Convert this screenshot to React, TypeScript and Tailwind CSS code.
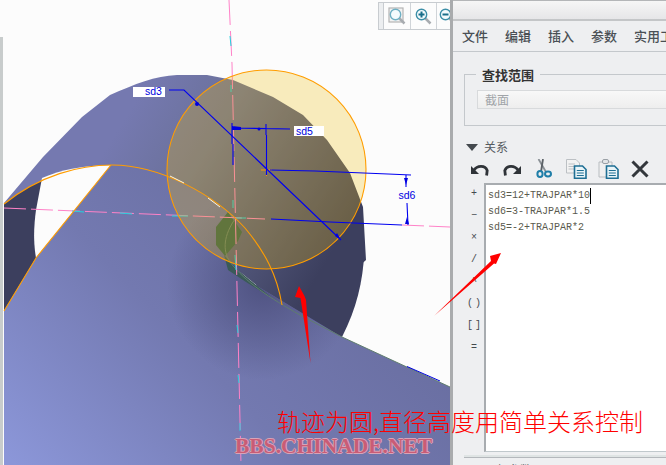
const cyanBits = [
  [230, 36, 231, 46],
  [231, 85, 231, 92],
  [233, 200, 233, 208],
  [235, 255, 236, 270],
  [237, 325, 238, 333],
  [238, 375, 239, 383],
  [240, 423, 240, 431],
  [72, 211, 84, 212],
  [120, 213, 132, 214],
  [172, 216, 188, 216],
  [236, 218, 246, 218],
]

function Viewport() {
  return (
    <svg viewBox="0 0 450 465" className="block w-full h-full">
      <defs>
        <linearGradient id="top" gradientUnits="userSpaceOnUse" x1="130" y1="110" x2="340" y2="240">
          <stop offset="0" stopColor="#7579b0" />
          <stop offset="0.35" stopColor="#6a7099" />
          <stop offset="1" stopColor="#3c3f5e" />
        </linearGradient>
        <linearGradient id="front" gradientUnits="userSpaceOnUse" x1="300" y1="220" x2="30" y2="480">
          <stop offset="0" stopColor="#6a6fa2" />
          <stop offset="0.45" stopColor="#7379b0" />
          <stop offset="1" stopColor="#8b96d8" />
        </linearGradient>
        <radialGradient id="frontShade" gradientUnits="userSpaceOnUse" cx="262" cy="285" r="95">
          <stop offset="0" stopColor="#4e5180" stopOpacity="0.95" />
          <stop offset="1" stopColor="#4e5180" stopOpacity="0" />
        </radialGradient>
      </defs>

      <path d="M360 205 C368 245 366 290 342 337 L260 300 L240 220 Z" fill="#3c3f5e" />
      <path d="M4 203 L43 157 L82 117 L110 95 C135 84 155 76 177 75 L207 75 L233 80 L273 97 L303 115 L327 140 L350 173 L363 207 L366 260 L300 320 L200 240 L4 240 Z" fill="url(#top)" />

      <path d="M4 204 C40 175 80 165 112 165 L36 258 L4 311 Z" fill="#3c3f5e" />
      <path d="M42 178 C60 170 85 165 112 165 L36 258 C33 240 34 225 36 210 Z" fill="#fcfcfc" />
      <path d="M36 258 L111 165 C160 165 205 190 235 218 C226 230 222 245 226 256 L247 280 L342 337 L450 387 L450 465 L4 465 L4 311 Z" fill="url(#front)" />
      <path d="M36 258 L111 165 C160 165 205 190 235 218 C226 230 222 245 226 256 L247 280 L342 337 L450 387 L450 465 L4 465 L4 311 Z" fill="url(#frontShade)" />

      <path d="M228 212 L216 227 L216 245 L225 256 L238 241 L242 232 Z" fill="#2f5c50" />
      <path d="M224 255 L240 272 L272 298 L246 282 L228 270 Z" fill="#3a5a58" />
      <path d="M235 219 C224 235 222 250 230 262 C245 282 270 298 300 315 L342 337 L450 387" fill="none" stroke="#5f7d6e" strokeWidth="1" />
      <path d="M407 366.5 L440 381" fill="none" stroke="#0000e0" strokeWidth="1" />

      <path d="M229 0 L232 64 M232 64 L241 465" fill="none" stroke="#ff82c8" strokeWidth="1" strokeDasharray="25 6" />
      <path d="M4 208 L265 219 M402 225 L450 227" fill="none" stroke="#ff82c8" strokeWidth="1" strokeDasharray="22 5" />
      {cyanBits.map((b) => (
        <line key={`${b[0]}-${b[1]}`} x1={b[0]} y1={b[1]} x2={b[2]} y2={b[3]} stroke="#22d3dd" strokeWidth="1" />
      ))}

      <circle cx="266.5" cy="169.5" r="99.5" fill="#edbc0b" fillOpacity="0.266" stroke="#ff9d00" strokeWidth="1.1" />
      <path d="M4 204 C40 175 80 165 112 165 C160 165 215 195 245 228 C265 252 277 275 282 305" fill="none" stroke="#ff9d00" strokeWidth="1.1" />
      <path d="M111 165 L36 258 L4 311" fill="none" stroke="#ff9d00" strokeWidth="1.1" />
      <path d="M170 176 L184 183 M208 198 L220 207" fill="none" stroke="#fff6dc" strokeWidth="1" />
      <path d="M261 170 L272 170 M266.5 165 L266.5 176" stroke="#ff9a00" strokeWidth="1" />

      <g fill="none" stroke="#0000f0" strokeWidth="1.1">
        <path d="M169 90 L184 90 L341 240" />
        <path d="M232 128 L290 129 M232 123 L232 144 M233 144 L233 165 M266 124 L266 135 M266.5 135 L266.5 175" />
        <path d="M270 170 L315 171 L388 174 L411 175 M271 219 L330 222 L402 225" />
        <path d="M406 175 L406 187 M407 203 L408 225" />
      </g>
      <g fill="#0000e0">
        <circle cx="197" cy="104" r="2" />
        <circle cx="259" cy="129" r="1.5" />
        <path d="M232 126 L241 127 L241 130 L232 130 Z" />
        <path d="M335 236 L341 240 L337 233 Z" />
        <path d="M404 178 L408 178 L406 185 Z" />
        <path d="M405 224 L409 224 L407 217 Z" />
      </g>

      <rect x="133" y="87" width="32" height="10" fill="#ffffff" />
      <rect x="294" y="126" width="30" height="10" fill="#ffffff" />
      <g fill="#0000e0" fontFamily="'Liberation Sans', sans-serif" fontSize="10.5">
        <text x="145" y="95">sd3</text>
        <text x="296" y="134.5">sd5</text>
        <text x="398.5" y="199">sd6</text>
      </g>

      <rect x="0" y="37" width="3" height="428" fill="#c8cccc" />
    </svg>
  )
}

function MagnifierIcon({ plus, minus, frame }: { plus?: boolean; minus?: boolean; frame?: boolean }) {
  return (
    <svg width="18" height="18" viewBox="0 0 18 18">
      {frame && <rect x="1" y="1" width="14" height="14" fill="#f2f2f2" stroke="#b4b4b4" strokeWidth="1.2" />}
      <line x1="11" y1="11" x2="16.5" y2="16.5" stroke="#a8acb0" strokeWidth="2.5" />
      <circle cx="7.5" cy="7.5" r="5.2" fill="#f4fbfd" stroke={frame ? "#6fb0c4" : "#3d8fa8"} strokeWidth="1.4" />
      {(plus || minus) && <rect x="4.5" y="6.5" width="6" height="2" fill="#1b6f8a" />}
      {plus && <rect x="6.5" y="4.5" width="2" height="6" fill="#1b6f8a" />}
    </svg>
  )
}

function ViewToolbar() {
  return (
    <div className="absolute left-[378px] top-[2px] flex h-[28px] w-[80px] border border-[#c8ccd0] bg-[#fcfcfc]">
      <div className="w-[5px] border-r border-[#c8ccd0] bg-[#eceef0]" />
      <div className="flex w-[27px] items-center justify-center border-r border-[#d0d4d8]"><MagnifierIcon frame /></div>
      <div className="flex w-[27px] items-center justify-center border-r border-[#d0d4d8]"><MagnifierIcon plus /></div>
      <div className="flex w-[20px] items-center justify-center"><MagnifierIcon minus /></div>
    </div>
  )
}

function UndoIcon({ flip }: { flip?: boolean }) {
  return (
    <svg width="18" height="12" viewBox="0 0 18 12" className={`mt-[2px] ${flip ? "-scale-x-100" : ""}`}>
      <path d="M3 6 C6 1.5 14 0.5 16.2 6.5 L15.6 11.5" fill="none" stroke="#2f3338" strokeWidth="2.8" />
      <path d="M0 2 L0 10 L8 10 Z" fill="#2f3338" />
    </svg>
  )
}

function ScissorsIcon() {
  return (
    <svg width="16" height="19" viewBox="0 0 16 19">
      <path d="M2.5 0 L10 13" stroke="#8a9096" strokeWidth="1.8" />
      <path d="M7 0 L5 13" stroke="#5a6066" strokeWidth="1.8" />
      <ellipse cx="4" cy="15" rx="2.6" ry="3" fill="none" stroke="#1f7ea8" strokeWidth="2" />
      <ellipse cx="12" cy="15" rx="3" ry="2.4" fill="none" stroke="#1f7ea8" strokeWidth="2" />
    </svg>
  )
}

function SheetIcon({ clip }: { clip?: boolean }) {
  return (
    <svg width="21" height="20" viewBox="0 0 21 20">
      {clip ? (
        <>
          <path d="M1 3 H14 V18 H1 Z" fill="#f0f0f0" stroke="#b8bcc0" />
          <rect x="4.5" y="0.5" width="6" height="4" rx="1.5" fill="#e4e6e8" stroke="#9aa0a6" />
        </>
      ) : (
        <>
          <path d="M0.5 0.5 H10 L13.5 4 V14 H0.5 Z" fill="#f2f2f2" stroke="#bcc0c4" />
          <path d="M2.5 5 H9 M2.5 7.5 H8 M2.5 10 H8" stroke="#bcc0c4" />
        </>
      )}
      <path d="M8.5 7 H16.5 L20 10.5 V19.2 H8.5 Z" fill="#e8f4f8" stroke="#1f6f94" strokeWidth="1.6" />
      <path d="M10.8 11.5 H17.8 M10.8 14 H17.8 M10.8 16.5 H17.8" stroke="#1f6f94" />
    </svg>
  )
}

function DeleteIcon() {
  return (
    <svg width="18" height="18" viewBox="0 0 18 18">
      <path d="M1.5 1.5 L16.5 16.5 M16.5 1.5 L1.5 16.5" stroke="#33373c" strokeWidth="3" />
    </svg>
  )
}

function SortIcon() {
  return (
    <svg width="12" height="20" viewBox="0 0 12 20">
      <circle cx="6" cy="3" r="2" fill="none" stroke="#555b60" />
      <path d="M2 10 H10 M6 7 V13" stroke="#1f6f94" strokeWidth="2" />
      <circle cx="6" cy="17" r="2.4" fill="none" stroke="#555b60" />
    </svg>
  )
}

function RelationsPanel() {
  const tools = [
    <UndoIcon key="undo" />,
    <UndoIcon key="redo" flip />,
    <ScissorsIcon key="cut" />,
    <SheetIcon key="copy" />,
    <SheetIcon key="paste" clip />,
    <DeleteIcon key="delete" />,
    <SortIcon key="sort" />,
  ]
  const lines = ["sd3=12+TRAJPAR*10", "sd6=3-TRAJPAR*1.5", "sd5=-2+TRAJPAR*2"]
  const symbols = ["+", "−", "×", "/", "^", "()", "[]", "="]

  return (
    <div className="flex h-full w-[216px] shrink-0 flex-col overflow-hidden border-l-[3px] border-[#a9abad] bg-[#eeeff1] font-['Noto_Sans_CJK_SC',sans-serif]">
      <div className="h-[21px] shrink-0 border-t border-[#b4b6b8] border-b-2 border-b-[#c4c6c8] bg-gradient-to-b from-[#f6f6f6] to-[#e6e6e8]" />
      <div className="flex h-[31px] shrink-0 items-center gap-[17px] border-b border-[#c4c8cc] pl-[9px] text-[13px] font-medium whitespace-nowrap text-[#4a4f55]">
        <span>文件</span>
        <span>编辑</span>
        <span>插入</span>
        <span>参数</span>
        <span>实用工具</span>
      </div>

      <div className="relative mt-[22px] ml-[11px] h-[52px] w-[260px] shrink-0 border border-[#c4c8cc] pt-[15px] pl-[12px]">
        <div className="absolute -top-[9px] left-[11px] bg-[#eeeff1] px-[6px] text-[13px] leading-[18px] font-bold text-[#333333]">查找范围</div>
        <div className="flex h-[19px] w-[240px] items-center border border-[#d8dadc] bg-gradient-to-b from-[#f8f8f8] to-[#eeeeee] pl-[7px] text-[12px] text-[#a0a4a8]">截面</div>
      </div>

      <div className="mt-[14px] flex h-[14px] shrink-0 items-center pl-[13px] text-[12px] text-[#555a60]">
        <span className="mr-[6px] h-0 w-0 border-x-[6px] border-t-[7px] border-x-transparent border-t-[#44494e]" />
        关系
      </div>

      <div className="mt-[2px] mb-[2px] flex h-[25px] shrink-0 items-center pl-[11px]">
        {tools.map((tool) => (
          <div key={tool.key} className="flex w-[32px] shrink-0 items-center justify-center">{tool}</div>
        ))}
      </div>

      <div className="flex h-[269px] shrink-0">
        <div className="flex w-[31px] shrink-0 flex-col items-center pl-[13px] font-['Liberation_Mono',monospace] text-[10px] text-[#44494e]">
          <div className="-mt-[1px]" />
          {symbols.map((s) => (
            <div key={s} className="flex h-[22px] shrink-0 items-center tracking-[2px] whitespace-nowrap">{s}</div>
          ))}
        </div>
        <div className="w-[190px] shrink-0 border-t-2 border-b border-l-2 border-[#a8acb0] border-b-[#c0c8cc] bg-white pt-[3px] pl-[2px] font-['Liberation_Mono',monospace] text-[10px] leading-[16px] text-[#5a5a4e]">
          {lines.map((line, i) => (
            <div key={line} className="flex h-[16px] items-center">
              {line}
              {i === 0 && <span className="h-[16px] w-px bg-black" />}
            </div>
          ))}
        </div>
      </div>

      <div className="mt-[3px] ml-[11px] h-[3px] w-[260px] shrink-0 border-b border-[#b4b8bc] bg-[#dfe4e4]" />
      <div className="mt-[4px] pl-[31px] text-[12px] leading-[16px] text-[#555a60]">局部参数</div>
    </div>
  )
}

export default function App() {
  return (
    <div className="relative flex h-[465px] w-[666px] overflow-hidden bg-[#fcfcfc]">
      <div className="relative h-full w-[450px] shrink-0 overflow-hidden">
        <Viewport />
        <ViewToolbar />
      </div>
      <RelationsPanel />

      {/* markup drawn over the screenshot */}
      <svg viewBox="0 0 666 465" className="absolute inset-0 h-full w-full">
        <path d="M310.5 363 L306 300 L304.5 296 L299 286 L295 297 L300.5 298 Z" fill="#ff0000" />
        <path d="M434 316 L491 261 L490 256 L501 253 L496 264 L494 263.5 Z" fill="#ff0000" />
      </svg>
      <div className="absolute top-[408px] left-[277px] font-['Noto_Sans_CJK_SC',sans-serif] text-[24px] leading-[26px] font-light whitespace-nowrap text-[#ff0000]">
        轨迹为圆,直径高度用简单关系控制
      </div>
      <div className="absolute top-[436px] left-[235px] font-['Liberation_Serif',serif] text-[21.5px] leading-[20px] font-bold whitespace-nowrap text-[#c95c76] [text-shadow:1px_0_0_#d8a4b8,-1px_0_0_#d8a4b8,0_1px_0_#d8a4b8,0_-1px_0_#d8a4b8]">
        BBS.CHINADE.NET
      </div>
    </div>
  )
}
